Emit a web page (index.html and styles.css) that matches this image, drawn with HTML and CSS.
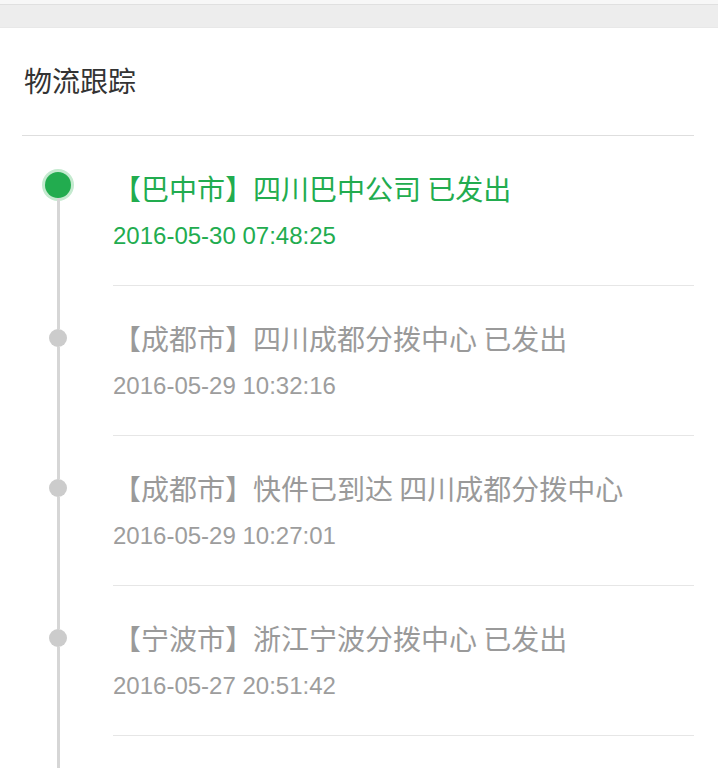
FILE: index.html
```html
<!DOCTYPE html>
<html lang="zh-CN">
<head>
    <meta charset="UTF-8">
    <meta name="viewport" content="width=device-width, initial-scale=1.0">
    <title>物流跟踪</title>
    <link rel="stylesheet" href="styles.css">
</head>
<body>
    <div class="status"></div>
    <div class="topbar"></div>

    <div class="header">
        <h1>物流跟踪</h1>
    </div>

    <ul class="timeline">
        <li class="step current">
            <div class="axis">
                <span class="line-top"></span>
                <span class="dot"></span>
                <span class="line-bottom"></span>
            </div>
            <div class="info">
                <p class="place">【巴中市】四川巴中公司 已发出</p>
                <p class="time">2016-05-30 07:48:25</p>
            </div>
        </li>
        <li class="step">
            <div class="axis">
                <span class="line-top"></span>
                <span class="dot"></span>
                <span class="line-bottom"></span>
            </div>
            <div class="info">
                <p class="place">【成都市】四川成都分拨中心 已发出</p>
                <p class="time">2016-05-29 10:32:16</p>
            </div>
        </li>
        <li class="step">
            <div class="axis">
                <span class="line-top"></span>
                <span class="dot"></span>
                <span class="line-bottom"></span>
            </div>
            <div class="info">
                <p class="place">【成都市】快件已到达 四川成都分拨中心</p>
                <p class="time">2016-05-29 10:27:01</p>
            </div>
        </li>
        <li class="step">
            <div class="axis">
                <span class="line-top"></span>
                <span class="dot"></span>
                <span class="line-bottom"></span>
            </div>
            <div class="info">
                <p class="place">【宁波市】浙江宁波分拨中心 已发出</p>
                <p class="time">2016-05-27 20:51:42</p>
            </div>
        </li>
    </ul>
</body>
</html>
```

FILE: styles.css
```css
body {
    margin: 0;
    background: #fff;
    font-family: "Noto Sans CJK SC", "Noto Sans", sans-serif;
}
.status {
    height: 4px;
    background: #f7f7f7;
}
.topbar {
    height: 22px;
    background: #ededed;
    border-top: 1px solid #e0e0e0;
    border-bottom: 1px solid #e8e8e8;
}
.header {
    margin: 0 24px 0 22px;
    padding: 32px 0 35px 2px;
    border-bottom: 1px solid #dedede;
}
.header h1 {
    margin: 0;
    font-size: 28px;
    line-height: 40px;
    font-weight: 400;
    color: #333;
}
.timeline {
    list-style: none;
    margin: 0;
    padding: 0 24px 0 22px;
}
.step {
    display: flex;
    height: 150px;
}
/* the line keeps running below the last entry */
.step:last-child {
    height: 190px;
}
.axis {
    width: 72px;
    display: flex;
    flex-direction: column;
    align-items: center;
    flex-shrink: 0;
}
.line-top,
.line-bottom {
    width: 3px;
    background: #d6d6d6;
}
.line-top {
    height: 43px;
}
.line-bottom {
    flex: 1;
}
.dot {
    width: 18px;
    height: 18px;
    border-radius: 50%;
    background: #cccccc;
}
.current .line-top {
    height: 36px;
    background: transparent;
}
.current .dot {
    width: 26px;
    height: 26px;
    background: #22ac4f;
    box-shadow: 0 0 0 3px #c4eacf;
}
.info {
    flex: 1;
    align-self: flex-start;
    box-sizing: border-box;
    height: 150px;
    margin-left: 19px;
    padding: 34px 0 0;
    border-bottom: 1px solid #e6e6e6;
}
.place {
    margin: 0;
    font-size: 28px;
    line-height: 36px;
    color: #9a9a9a;
    white-space: nowrap;
}
.time {
    margin: 15px 0 0;
    font-family: "Liberation Sans", Arial, sans-serif;
    font-size: 24px;
    line-height: 30px;
    color: #9d9d9d;
}
.current .place,
.current .time {
    color: #22ac4f;
}
```
